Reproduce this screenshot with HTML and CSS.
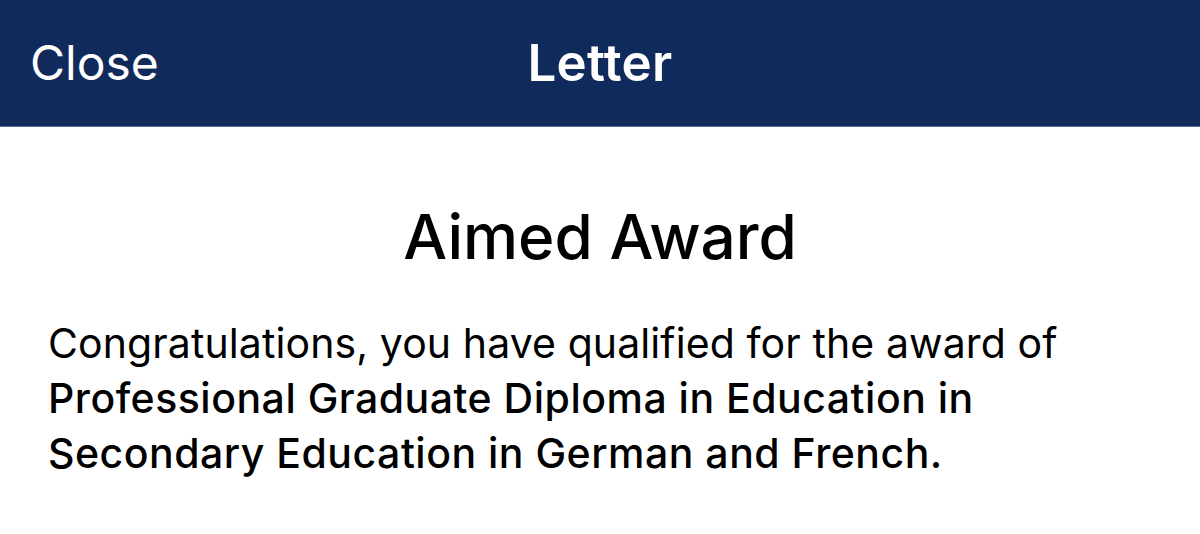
FILE: index.html
```html
<!DOCTYPE html>
<html>
<head>
<meta charset="utf-8">
<link rel="stylesheet" href="styles.css">
</head>
<body>
<header class="nav">
  <span class="nav-close">Close</span>
  <span class="nav-title">Letter</span>
</header>
<main class="content">
  <h1 class="title">Aimed Award</h1>
  <p class="body">Congratulations, you have qualified for the award of <span class="award">Professional Graduate Diploma in Education in Secondary Education in German and French.</span></p>
</main>
</body>
</html>
```
FILE: styles.css
```css
html, body {
  margin: 0;
  padding: 0;
  background: #ffffff;
  font-family: Inter, "Noto Sans", sans-serif;
}
.nav {
  position: relative;
  height: 126px;
  background: #0f2a5b;
  border-bottom: 1px solid #5a6e92;
  display: flex;
  align-items: center;
  justify-content: center;
  color: #ffffff;
}
.nav-close {
  position: absolute;
  left: 30px;
  top: 35px;
  font-size: 48px;
  font-weight: 400;
  line-height: 56px;
}
.nav-title {
  font-size: 51px;
  font-weight: 600;
  line-height: 56px;
  letter-spacing: 0.3px;
}
.content {
  padding: 0 48px;
}
.title {
  margin: 72px 0 0;
  text-align: center;
  font-size: 62px;
  font-weight: 500;
  line-height: 76px;
  color: #000;
}
.body {
  margin: 41px 0 0;
  font-size: 41px;
  line-height: 55px;
  letter-spacing: 0.1px;
  color: #000;
  width: 1100px;
}
.award {
  font-weight: 500;
  letter-spacing: 0.5px;
}
```
